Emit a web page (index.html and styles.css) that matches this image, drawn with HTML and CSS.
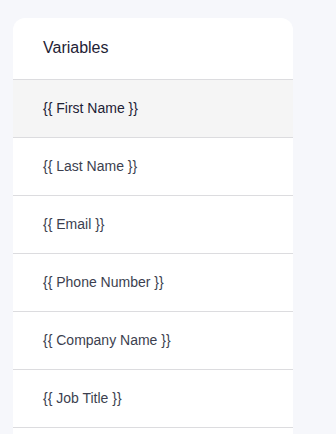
FILE: index.html
```html
<!DOCTYPE html>
<html>
<head>
<meta charset="utf-8">
<link rel="stylesheet" href="styles.css">
</head>
<body>
<div class="page">
  <div class="card">
    <div class="card-header">Variables</div>
    <ul class="var-list">
      <li class="var-item active">{{ First Name }}</li>
      <li class="var-item">{{ Last Name }}</li>
      <li class="var-item">{{ Email }}</li>
      <li class="var-item">{{ Phone Number }}</li>
      <li class="var-item">{{ Company Name }}</li>
      <li class="var-item">{{ Job Title }}</li>
    </ul>
  </div>
</div>
</body>
</html>
```
FILE: styles.css
```css
html, body {
  margin: 0;
  padding: 0;
  background: #f6f7fb;
  font-family: "Liberation Sans", Arial, sans-serif;
  height: 100%;
  overflow: hidden;
}
.page {
  padding: 18px 0 0 13px;
}
.card {
  width: 280px;
  background: #ffffff;
  border-radius: 12px 12px 0 0;
  padding-bottom: 40px;
}
.card-header {
  height: 62px;
  box-sizing: border-box;
  padding: 0 30px 2px;
  display: flex;
  align-items: center;
  font-size: 16px;
  color: #1e2235;
  border-bottom: 1px solid #dcdcdf;
}
.var-list {
  list-style: none;
  margin: 0;
  padding: 0;
}
.var-item {
  height: 58px;
  box-sizing: border-box;
  padding: 0 30px 2px;
  display: flex;
  align-items: center;
  font-size: 14px;
  color: #3c3f4f;
  border-bottom: 1px solid #dcdcdf;
}
.var-item.active {
  background: #f5f5f5;
  color: #1e2235;
}
```
